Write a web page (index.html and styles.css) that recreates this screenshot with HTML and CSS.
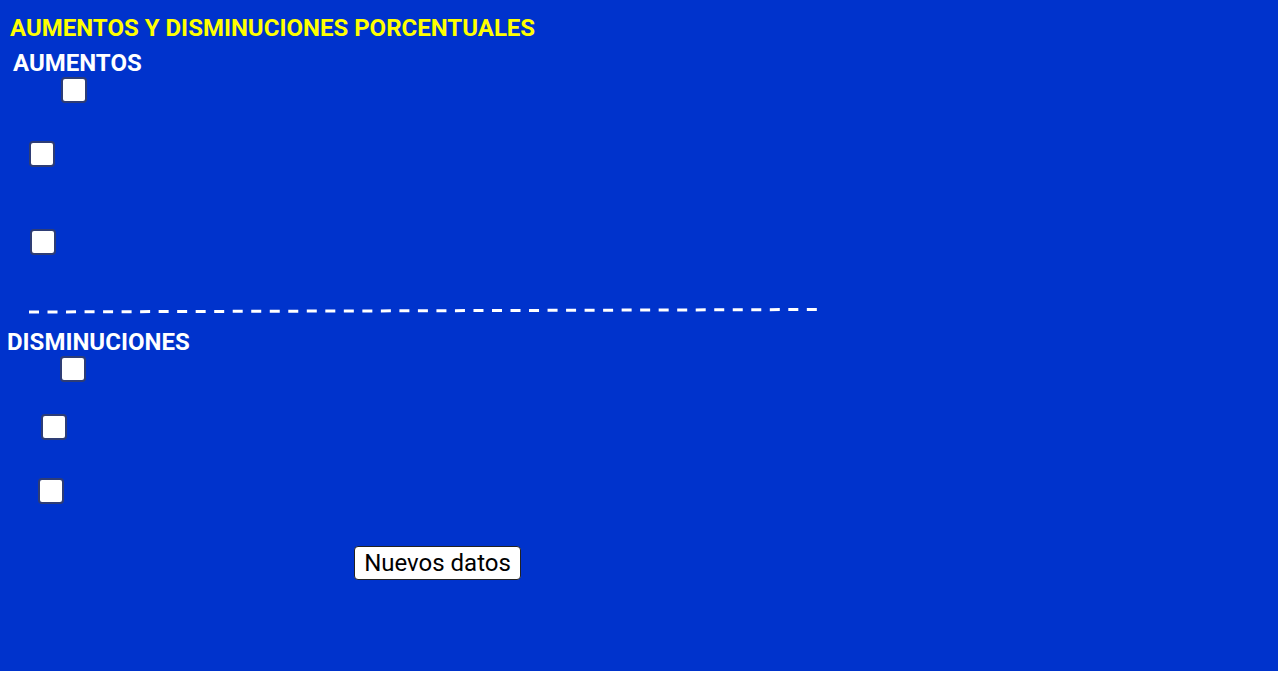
FILE: index.html
```html
<!DOCTYPE html>
<html lang="es">

<head>
  <meta charset="UTF-8">
  <meta name="viewport" content="width=device-width, initial-scale=1.0">
  <title>Aumentos y disminuciones porcentuales</title>
  <link rel="stylesheet" href="styles.css">
</head>

<body>
  <div class="applet">
    <h1 class="title">AUMENTOS Y DISMINUCIONES PORCENTUALES</h1>

    <h2 class="section up">AUMENTOS</h2>
    <input type="checkbox" class="check c1">
    <input type="checkbox" class="check c2">
    <input type="checkbox" class="check c3">

    <svg class="divider" width="830" height="10" viewBox="0 0 830 10">
      <line x1="29" y1="7" x2="818" y2="4.5" stroke="#fff" stroke-width="3" stroke-dasharray="10 8.52" />
    </svg>

    <h2 class="section down">DISMINUCIONES</h2>
    <input type="checkbox" class="check c4">
    <input type="checkbox" class="check c5">
    <input type="checkbox" class="check c6">

    <button class="newData">Nuevos datos</button>
  </div>
</body>

</html>
```

FILE: styles.css
```css
body {
  margin: 0;
  background: #fff;
  font-family: Roboto, "Liberation Sans", sans-serif;
}
.applet {
  display: flow-root;
  width: 1278px;
  height: 671px;
  background: #0033cc;
}
.title {
  margin: 14px 0 0 10px;
  font-size: 24px;
  line-height: 28px;
  font-weight: 700;
  color: #ffff00;
}
.section {
  margin: 0;
  font-size: 24px;
  line-height: 28px;
  font-weight: 700;
  color: #fff;
}
.section.up {
  margin: 7px 0 0 13px;
}
.section.down {
  margin: 13px 0 0 7px;
}
.check {
  appearance: none;
  display: block;
  box-sizing: border-box;
  width: 26px;
  height: 26px;
  margin: 0;
  background: #fff;
  border: 2px solid #2e3d75;
  border-radius: 4px;
  cursor: pointer;
}
.c1 { margin: 0 0 0 61px; }
.c2 { margin: 38px 0 0 29px; }
.c3 { margin: 62px 0 0 30px; }
.c4 { margin: 0 0 0 60px; }
.c5 { margin: 32px 0 0 41px; }
.c6 { margin: 38px 0 0 38px; }
.divider {
  display: block;
  margin-top: 50px;
}
.newData {
  display: block;
  box-sizing: border-box;
  width: 167px;
  height: 34px;
  margin: 42px 0 0 354px;
  padding: 0;
  font-family: Roboto, "Liberation Sans", sans-serif;
  font-size: 24px;
  line-height: 32px;
  color: #000;
  background: #fff;
  border: 1px solid #222;
  border-radius: 4px;
  cursor: pointer;
}
```
